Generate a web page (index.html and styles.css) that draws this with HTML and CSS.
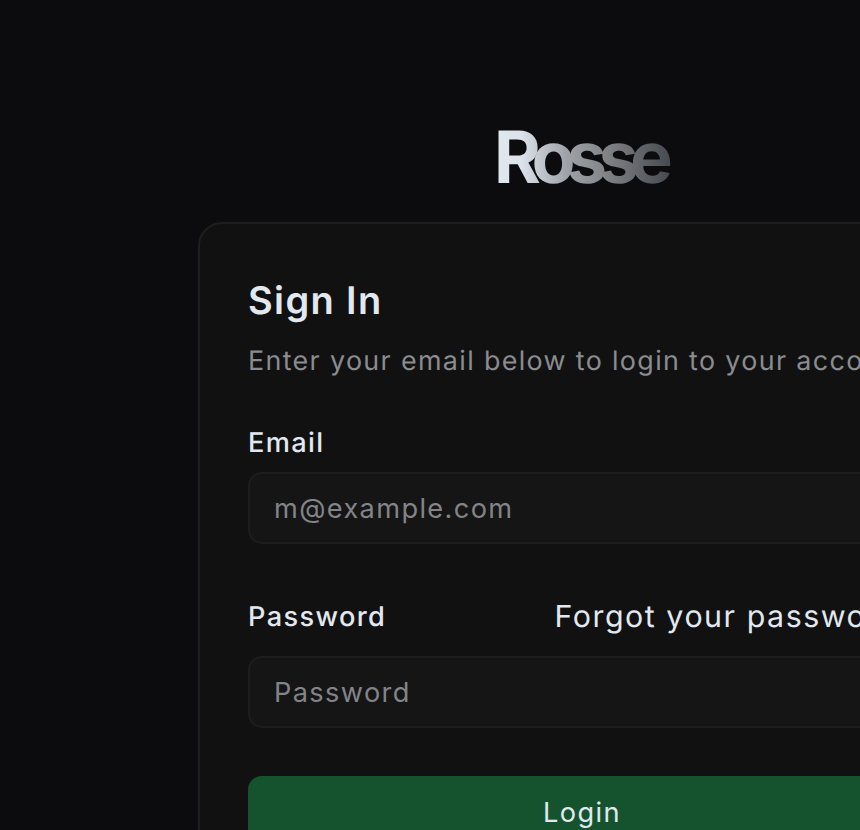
FILE: index.html
```html
<!DOCTYPE html>
<html lang="en">
<head>
    <meta charset="UTF-8">
    <meta name="viewport" content="width=device-width, initial-scale=1.0">
    <title>Rosse - Sign In</title>
    <link rel="stylesheet" href="styles.css">
</head>
<body>
    <div class="page">
        <div class="logo">Rosse</div>

        <form class="card">
            <h1>Sign In</h1>
            <p class="subtitle">Enter your email below to login to your account</p>

            <div class="field">
                <label for="email">Email</label>
                <input type="email" id="email" placeholder="m@example.com">
            </div>

            <div class="field">
                <div class="label-row">
                    <label for="password">Password</label>
                    <a href="#" class="forgot">Forgot your password?</a>
                </div>
                <input type="password" id="password" placeholder="Password">
            </div>

            <button type="button" class="login">Login</button>
        </form>
    </div>
</body>
</html>
```

FILE: styles.css
```css
html, body { margin: 0; height: 100%; overflow: hidden; }
body { font-family: Inter, "Liberation Sans", sans-serif; background-color: #0c0c0f; color: #e2e8f0; text-rendering: geometricPrecision; }

.page {
    width: 1164px;
    display: flex;
    flex-direction: column;
    align-items: center;
    padding-top: 120px;
}

/* padding keeps the last letter inside the gradient box, the tight tracking would clip it */
.logo {
    font-size: 72px;
    line-height: 76px;
    font-weight: 700;
    letter-spacing: -0.121em;
    margin-left: 3px;
    padding-right: 9px;
    background: linear-gradient(90deg, #e2e8f0 0%, #dde3eb 15%, #a0a4aa 40%, #85878b 60%, #44474b 100%);
    -webkit-background-clip: text;
    background-clip: text;
    color: transparent;
}

.card {
    box-sizing: border-box;
    width: 768px;
    margin-top: 26px;
    padding: 48px;
    background-color: #111111;
    border: 2px solid #1d1e1f;
    border-radius: 24px;
    display: flex;
    flex-direction: column;
}

h1 { margin: 1px 0 0; font-size: 38px; line-height: 56px; font-weight: 600; letter-spacing: 0.036em; }
.subtitle { margin: 14px 0 0; font-size: 26.88px; line-height: 36px; color: #8a8c90; letter-spacing: 0.05em; white-space: nowrap; }

.field { display: flex; flex-direction: column; margin-top: 46px; }
.field + .field { margin-top: 55px; }
label { font-size: 27.2px; line-height: 36px; font-weight: 500; letter-spacing: 0.05em; }

.label-row { display: flex; justify-content: space-between; align-items: center; margin-bottom: 10px; }
.forgot { font-size: 30.4px; line-height: 36px; color: #e2e8f0; text-decoration: none; letter-spacing: 0.05em; white-space: nowrap; }

input {
    box-sizing: border-box;
    width: 100%;
    height: 72px;
    margin-top: 11px;
    padding: 0 24px;
    font-family: inherit;
    font-size: 27.2px;
    letter-spacing: 0.05em;
    color: #e2e8f0;
    background-color: #151515;
    border: 2px solid #1d1d1e;
    border-radius: 14px;
}
input::placeholder { color: #828488; opacity: 1; }

.login {
    height: 72px;
    margin-top: 48px;
    font-family: inherit;
    font-size: 27.2px;
    font-weight: 400;
    letter-spacing: 0.05em;
    color: #e2e8f0;
    background-color: #14532d;
    border: 0;
    border-radius: 14px;
}
```
